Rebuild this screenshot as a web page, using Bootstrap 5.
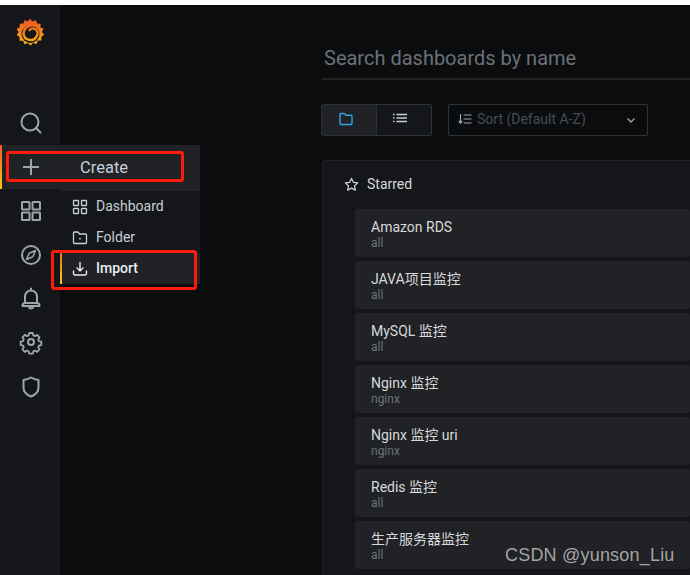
<!DOCTYPE html>
<html lang="zh">
<head>
<meta charset="utf-8">
<title>Grafana</title>
<link href="https://cdn.jsdelivr.net/npm/bootstrap@5.3.0/dist/css/bootstrap.min.css" rel="stylesheet">
<style>
html,body{height:575px;overflow:hidden;background:#0b0c0e;}
body{font-family:Roboto,"Noto Sans CJK SC",sans-serif;font-size:14px;color:#d8d9da;position:relative;}
.topband{height:5px;background:#fff;}
.shell{height:570px;}
.rail{width:60px;background:#141619;flex:none;}
.rail-logo{height:96px;padding-top:12px;}
.rail-item{height:44px;color:#9fa5ad;padding-left:2px;}
.rail-active{background:#202226;position:relative;}
.rail-active::before{content:"";position:absolute;left:0;top:0;bottom:0;width:2px;background:linear-gradient(#f05a28,#fbca0a);}
.rail-item svg{width:24px;height:24px;}
.stage{min-width:0;overflow:hidden;background:#0b0c0e;}
.search-line{margin-left:262px;height:43px;padding:0 0 0 2px;margin-top:32px;border-bottom:2px solid #202226;font-size:20px;line-height:42px;color:#6b7179;}
.tools{margin:24px 0 0 261px;height:32px;gap:16px;}
.layout-group{width:111px;height:32px;border:1px solid #2c3235;border-radius:2px;}
.layout-cell{height:30px;color:#c7d0d9;padding-bottom:2px;}
.layout-on{width:55px;background:#202226;border-right:1px solid #2c3235;color:#33a2e5;padding-right:6px;}
.layout-off{flex:1;background:#141619;padding-right:8px;}
.sort-box{width:200px;height:32px;border:1px solid #2c3235;border-radius:2px;padding:0 11px 0 9px;color:#464c54;font-size:14px;background:#0b0c0e;}
.sort-box svg{color:#9fa5ad;}
.sort-label{padding-bottom:2px;padding-left:1px;}
.sort-mark{margin-top:-2px;}
.panel-box{margin:24px 0 0 262px;background:#141619;border:1px solid #202226;border-right:0;border-radius:3px 0 0 0;height:420px;padding:0 0 0 32px;}
.panel-head{height:48px;padding-bottom:2px;color:#d8d9da;gap:8px;margin-left:-11px;}
.dash-row{height:48px;margin-bottom:4px;background:#202226;border-radius:2px;padding:10px 16px 0;}
.dash-name{color:#d8d9da;font-size:14px;line-height:17px;}
.dash-tag{color:#6b7179;font-size:12px;line-height:14px;}
.flyout{position:absolute;left:60px;top:145px;width:140px;background:#141619;}
.fly-head{height:46px;background:#202226;font-size:16.500px;color:#c7d0d9;padding-left:20px;}
.fly-item{height:31px;padding-left:12px;gap:8px;color:#c7d0d9;font-size:14px;position:relative;}
.fly-item svg{width:16px;height:16px;flex:none;}
.fly-on{background:#202226;color:#e9edf2;font-weight:500;}
.fly-on::before{content:"";position:absolute;left:0;top:0;bottom:0;width:2px;background:linear-gradient(#eb7b18,#fbca0a);}
.redmark{position:absolute;border:3px solid #fb1c10;border-radius:3px;pointer-events:none;}
.red-a{left:6px;top:151px;width:178px;height:31px;}
.red-b{left:51px;top:250px;width:146px;height:40px;}
.stamp{position:absolute;left:505px;top:544px;font-family:"Liberation Sans",sans-serif;font-size:18px;letter-spacing:.2px;line-height:22px;color:#a4a4a4;text-shadow:1px 1px 1px #222;}
</style>
</head>
<body>
<div class="topband"></div>
<div class="shell d-flex">
  <nav class="rail">
    <div class="rail-logo d-flex justify-content-center">
      <svg width="30" height="32" viewBox="0 0 30 32">
        <defs><linearGradient id="gf" gradientUnits="userSpaceOnUse" x1="0" y1="2" x2="0" y2="31"><stop offset="0" stop-color="#f0522a"/><stop offset="1" stop-color="#fcc30b"/></linearGradient></defs>
        <path fill="url(#gf)" d="M15 1.500l2.300 2.900 3.600-1.400 1.200 3.500 3.600.2-.3 3.500 3.200 1.600-1.700 3.200 2.400 2.700-2.900 2v3.700l-3.600.1-1.300 3.500-3.500-1-2.500 2.600-2.600-2.500-3.400 1.100-1.400-3.400-3.600-.1.100-3.600-3-2.100 2-3-2-3 3.100-1.700.1-3.600 3.600-.2 1.200-3.400 3.400 1.200z"/>
        <circle cx="15.500" cy="17" r="9" fill="#141619"/>
        <path fill="none" stroke="url(#gf)" stroke-width="2.400" d="M25 12.500A9 9 0 0 0 8.500 16.500 A7 7 0 0 0 22 18.500 A4.600 4.600 0 0 0 14 13.800"/>
      </svg>
    </div>
    <div class="rail-item d-flex align-items-center justify-content-center">
      <svg viewBox="0 0 24 24" fill="none" stroke="currentColor" stroke-width="2" stroke-linecap="round"><circle cx="11" cy="11" r="8.500"/><path d="M17.500 17.500l4 4"/></svg>
    </div>
    <div class="rail-item rail-active d-flex align-items-center justify-content-center">
      <svg viewBox="0 0 24 24" fill="none" stroke="currentColor" stroke-width="2"><path d="M12 4v16M4 12h16"/></svg>
    </div>
    <div class="rail-item d-flex align-items-center justify-content-center">
      <svg viewBox="0 0 24 24" fill="none" stroke="currentColor" stroke-width="2"><rect x="3" y="3" width="7.500" height="7.500" rx=".5"/><rect x="13.500" y="3" width="7.500" height="7.500" rx=".5"/><rect x="3" y="13.500" width="7.500" height="7.500" rx=".5"/><rect x="13.500" y="13.500" width="7.500" height="7.500" rx=".5"/></svg>
    </div>
    <div class="rail-item d-flex align-items-center justify-content-center">
      <svg viewBox="0 0 24 24" fill="none" stroke="currentColor" stroke-width="2" stroke-linejoin="round"><circle cx="12" cy="12" r="9"/><path d="M16.500 7.500l-2.700 6.300-6.300 2.700 2.700-6.300z" stroke-width="1.500"/></svg>
    </div>
    <div class="rail-item d-flex align-items-center justify-content-center">
      <svg viewBox="0 0 24 24" fill="none" stroke="currentColor" stroke-width="2" stroke-linejoin="round" stroke-linecap="round"><path d="M12 3.500a6 6 0 0 0-6 6v6.500h12V9.500a6 6 0 0 0-6-6zM12 1.500v2M3.500 19c0-1.500 1-3 2.500-3h12c1.500 0 2.500 1.500 2.500 3zM10 19.500a2 2 0 0 0 4 0"/></svg>
    </div>
    <div class="rail-item d-flex align-items-center justify-content-center">
      <svg viewBox="0 0 24 24" fill="none" stroke="currentColor" stroke-width="2" stroke-linejoin="round"><circle cx="12" cy="11" r="3"/><path d="M10 2.500h4l.6 2.700 1.900.8 2.300-1.500 2.700 2.800-1.500 2.300.8 1.900 2.700.5v3.900l-2.700.6-.8 1.900 1.500 2.300-2.700 2.800-2.300-1.500-1.900.8-.6 2.600h-4l-.6-2.600-1.900-.8-2.300 1.500-2.700-2.800 1.500-2.300-.8-1.900-2.700-.6v-3.900l2.700-.5.800-1.900-1.500-2.300 2.700-2.800 2.300 1.500 1.900-.8z" transform="translate(12 11) scale(.9) translate(-12 -12.500)"/></svg>
    </div>
    <div class="rail-item d-flex align-items-center justify-content-center">
      <svg viewBox="0 0 24 24" fill="none" stroke="currentColor" stroke-width="2" stroke-linejoin="round"><path d="M12 2.500c2.500 1.600 5 2.300 7.500 2.500v7.500c0 4.200-3 7.300-7.500 9-4.500-1.700-7.500-4.800-7.500-9V5c2.500-.2 5-.9 7.500-2.500z"/></svg>
    </div>
  </nav>
  <main class="stage flex-grow-1">
    <div class="search-line">Search dashboards by name</div>
    <div class="tools d-flex align-items-center">
      <div class="layout-group d-flex">
        <div class="layout-cell layout-on d-flex align-items-center justify-content-center">
          <svg width="16" height="16" viewBox="0 0 16 16" fill="none" stroke="currentColor" stroke-width="1.400" stroke-linejoin="round"><path d="M2 3.500a1 1 0 0 1 1-1h3.300l1.500 1.700H13a1 1 0 0 1 1 1v7.300a1 1 0 0 1-1 1H3a1 1 0 0 1-1-1z"/></svg>
        </div>
        <div class="layout-cell layout-off d-flex align-items-center justify-content-center">
          <svg width="16" height="16" viewBox="0 0 16 16" fill="none" stroke="currentColor" stroke-width="1.300"><path d="M4.500 3.500H15M4.500 7H15M4.500 10.500H15M1 3.500h1.500M1 7h1.500M1 10.500h1.500"/></svg>
        </div>
      </div>
      <div class="sort-box d-flex align-items-center">
        <svg width="14" height="14" viewBox="0 0 14 14" fill="none" stroke="currentColor" stroke-width="1.200" class="me-1 sort-mark"><path d="M2.500 2v9M.8 8.800l1.700 2.400 1.700-2.400M5.500 3h8M5.500 7h8M5.500 11h8"/></svg>
        <span class="flex-grow-1 sort-label">Sort (Default A-Z)</span>
        <svg width="10" height="10" viewBox="0 0 10 10" fill="none" stroke="currentColor" stroke-width="1.400"><path d="M1.500 3.500L5 7l3.500-3.500"/></svg>
      </div>
    </div>
    <section class="panel-box">
      <div class="panel-head d-flex align-items-center">
        <svg width="15" height="15" viewBox="0 0 16 16" fill="none" stroke="#d8d9da" stroke-width="1.300" stroke-linejoin="round"><path d="M8 1.500l2 4.200 4.600.6-3.400 3.200.9 4.600L8 11.900l-4.100 2.200.9-4.600L1.400 6.300 6 5.700z"/></svg>
        <span>Starred</span>
      </div>
      <div class="dash-row"><div class="dash-name">Amazon RDS</div><div class="dash-tag">all</div></div>
      <div class="dash-row"><div class="dash-name">JAVA项目监控</div><div class="dash-tag">all</div></div>
      <div class="dash-row"><div class="dash-name">MySQL 监控</div><div class="dash-tag">all</div></div>
      <div class="dash-row"><div class="dash-name">Nginx 监控</div><div class="dash-tag">nginx</div></div>
      <div class="dash-row"><div class="dash-name">Nginx 监控 uri</div><div class="dash-tag">nginx</div></div>
      <div class="dash-row"><div class="dash-name">Redis 监控</div><div class="dash-tag">all</div></div>
      <div class="dash-row"><div class="dash-name">生产服务器监控</div><div class="dash-tag">all</div></div>
    </section>
  </main>
</div>
<aside class="flyout">
  <div class="fly-head d-flex align-items-center">Create</div>
  <div class="fly-item d-flex align-items-center">
    <svg viewBox="0 0 16 16" fill="none" stroke="currentColor" stroke-width="1.300"><rect x="1.500" y="1.500" width="5" height="5" rx=".5"/><rect x="9.500" y="1.500" width="5" height="5" rx=".5"/><rect x="1.500" y="9.500" width="5" height="5" rx=".5"/><rect x="9.500" y="9.500" width="5" height="5" rx=".5"/></svg>
    <span>Dashboard</span>
  </div>
  <div class="fly-item d-flex align-items-center">
    <svg viewBox="0 0 16 16" fill="none" stroke="currentColor" stroke-width="1.300" stroke-linejoin="round"><path d="M1.500 3a1 1 0 0 1 1-1h3.500l1.500 2h6a1 1 0 0 1 1 1v7.500a1 1 0 0 1-1 1h-11a1 1 0 0 1-1-1z"/><circle cx="8" cy="8.700" r=".9" fill="currentColor" stroke="none"/></svg>
    <span>Folder</span>
  </div>
  <div class="fly-item fly-on d-flex align-items-center">
    <svg viewBox="0 0 16 16" fill="none" stroke="currentColor" stroke-width="1.400" stroke-linecap="round" stroke-linejoin="round"><path d="M8 1.500v8.500M5 7l3 3 3-3M1.500 10v2.500a1.500 1.500 0 0 0 1.500 1.500h10a1.500 1.500 0 0 0 1.500-1.500V10"/></svg>
    <span>Import</span>
  </div>
</aside>
<div class="redmark red-a"></div>
<div class="redmark red-b"></div>
<div class="stamp">CSDN @yunson_Liu</div>
<script src="https://cdn.jsdelivr.net/npm/bootstrap@5.3.0/dist/js/bootstrap.bundle.min.js"></script>
</body>
</html>
